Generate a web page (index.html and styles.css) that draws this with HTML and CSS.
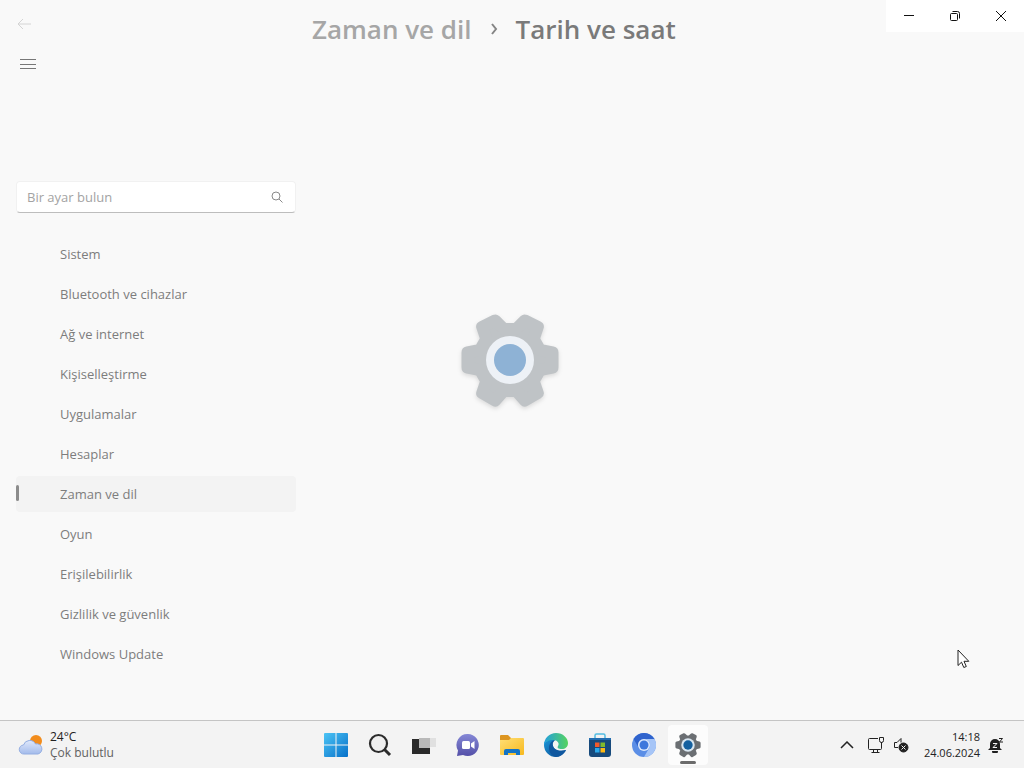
FILE: index.html
```html
<!DOCTYPE html>
<html lang="tr">

<head>
    <meta charset="UTF-8">
    <meta name="viewport" content="width=device-width, initial-scale=1.0">
    <title>Ayarlar</title>
    <link rel="stylesheet" href="styles.css">
</head>

<body>
    <!-- Settings window -->
    <div class="window">
        <aside class="sidebar">
            <button class="icon-btn back" aria-label="Geri">
                <svg width="16" height="16" viewBox="0 0 16 16"><path d="M15 8H2M7 3L2 8l5 5"/></svg>
            </button>
            <button class="icon-btn menu" aria-label="Menü">
                <svg width="16" height="16" viewBox="0 0 16 16"><path d="M0 3.500h16M0 8.500h16M0 12.500h16"/></svg>
            </button>

            <form class="search">
                <input type="text" placeholder="Bir ayar bulun" aria-label="Bir ayar bulun">
                <svg width="12" height="12" viewBox="0 0 12 12"><circle cx="5" cy="5" r="4"/><path d="M8 8l3.500 3.500"/></svg>
            </form>

            <nav class="nav">
                <a href="#">Sistem</a>
                <a href="#">Bluetooth ve cihazlar</a>
                <a href="#">Ağ ve internet</a>
                <a href="#">Kişiselleştirme</a>
                <a href="#">Uygulamalar</a>
                <a href="#">Hesaplar</a>
                <a href="#" class="active">Zaman ve dil</a>
                <a href="#">Oyun</a>
                <a href="#">Erişilebilirlik</a>
                <a href="#">Gizlilik ve güvenlik</a>
                <a href="#">Windows Update</a>
            </nav>
        </aside>

        <main class="content">
            <h1 class="breadcrumb">
                <a href="#">Zaman ve dil</a>
                <svg width="8" height="12" viewBox="0 0 8 12"><path d="M2 1l4 5-4 5"/></svg>
                <span>Tarih ve saat</span>
            </h1>
        </main>

        <div class="caption">
            <button aria-label="Simge durumuna küçült">
                <svg width="12" height="12" viewBox="0 0 12 12"><path d="M1 5.500h10"/></svg>
            </button>
            <button aria-label="Önceki boyut">
                <svg width="12" height="12" viewBox="0 0 12 12"><rect x="1.500" y="3.500" width="7" height="7" rx="1"/><path d="M3.500 1.500h5a2 2 0 0 1 2 2v5"/></svg>
            </button>
            <button aria-label="Kapat">
                <svg width="12" height="12" viewBox="0 0 12 12"><path d="M1 1l10 10M11 1L1 11"/></svg>
            </button>
        </div>

        <!-- Splash gear shown while the page loads -->
        <div class="splash">
            <svg width="104" height="104" viewBox="-50 -52 104 104">
                <path class="gear" d="M30-10L42.500-7.500V7.500L30 10L23.700 21L27.800 33.100L14.800 40.500L6.300 31H-6.300L-14.800 40.500L-27.800 33.100L-23.700 21L-30 10L-42.500 7.500V-7.500L-30-10L-23.700-21L-27.800-33.100L-14.800-39.500L-6.300-31H6.300L14.800-39.500L27.800-33.100L23.700-21Z"/>
                <circle class="ring" r="24"/>
                <circle class="hub" r="16"/>
            </svg>
        </div>

        <svg class="cursor" width="13" height="20" viewBox="0 0 13 20">
            <path d="M1 1v15.500l3.500-3.300 2.300 5.300 2.500-1-2.300-5.200h4.800z"/>
        </svg>
    </div>

    <!-- Taskbar -->
    <footer class="taskbar">
        <button class="weather">
            <svg width="26" height="22" viewBox="0 0 26 22">
                <defs>
                    <linearGradient id="cloud" x1="0" y1="0" x2="0" y2="1">
                        <stop offset="0" stop-color="#dfe8fb"/>
                        <stop offset="1" stop-color="#a3bbeb"/>
                    </linearGradient>
                </defs>
                <circle cx="18" cy="7" r="6" fill="#f28c1c"/>
                <path d="M6 20a4.500 4.500 0 0 1-.5-9A6.500 6.500 0 0 1 17.500 10 5 5 0 0 1 20 20z" fill="url(#cloud)" stroke="#94aee2"/>
            </svg>
            <span class="weather-text">
                <span>24°C</span>
                <span class="muted">Çok bulutlu</span>
            </span>
        </button>

        <div class="apps">
            <button aria-label="Başlat">
                <svg width="24" height="24" viewBox="0 0 24 24">
                    <defs>
                        <linearGradient id="win" x1="0" y1="0" x2="24" y2="24" gradientUnits="userSpaceOnUse">
                            <stop offset="0" stop-color="#4cc4f5"/>
                            <stop offset="1" stop-color="#0670c9"/>
                        </linearGradient>
                    </defs>
                    <path fill="url(#win)" d="M1 0h10.500v11.500H0V1a1 1 0 0 1 1-1zM12.500 0H23a1 1 0 0 1 1 1v10.500H12.500zM0 12.500h11.500V24H1a1 1 0 0 1-1-1zM12.500 12.500H24V23a1 1 0 0 1-1 1H12.500z"/>
                </svg>
            </button>
            <button aria-label="Ara">
                <svg width="24" height="24" viewBox="0 0 24 24" fill="none" stroke="#2b2b2b">
                    <circle cx="10.500" cy="10.500" r="8.500" stroke-width="2.200" fill="#efefef"/>
                    <path d="M16.500 16.500l5.500 5.500" stroke-width="3"/>
                </svg>
            </button>
            <button aria-label="Görev görünümü">
                <svg width="28" height="24" viewBox="0 0 28 24">
                    <path fill="#e0e0e0" d="M18 5h8v9h-8z"/>
                    <path fill="#2a2a2a" d="M2 6h18v15H2z"/>
                    <path fill="#b9b9b9" d="M9 5h11v10H9z"/>
                </svg>
            </button>
            <button aria-label="Sohbet">
                <svg width="24" height="24" viewBox="0 0 24 24">
                    <defs>
                        <linearGradient id="chat" x1="0" y1="0" x2="0" y2="1">
                            <stop offset="0" stop-color="#8588d6"/>
                            <stop offset="1" stop-color="#5450a8"/>
                        </linearGradient>
                    </defs>
                    <path fill="url(#chat)" d="M12 1a11 11 0 1 1-5 20.900L1 23l1-5.500A11 11 0 0 1 12 1z"/>
                    <rect x="6" y="8" width="8" height="8" rx="1.500" fill="#fff"/>
                    <path fill="#fff" d="M15 10.500l3.500-2.500v8L15 13.500z"/>
                </svg>
            </button>
            <button aria-label="Dosya Gezgini">
                <svg width="26" height="24" viewBox="0 0 26 24">
                    <defs>
                        <linearGradient id="folder" x1="0" y1="0" x2="1" y2="1">
                            <stop offset="0" stop-color="#ffdf76"/>
                            <stop offset="1" stop-color="#f7b91e"/>
                        </linearGradient>
                    </defs>
                    <path fill="#dd9520" d="M2 2h7l3 3h11a1 1 0 0 1 1 1v4H1V3a1 1 0 0 1 1-1z"/>
                    <path fill="url(#folder)" d="M1 7h9l2-2h12a1 1 0 0 1 1 1v15a1 1 0 0 1-1 1H2a1 1 0 0 1-1-1z"/>
                    <path fill="#1473c4" d="M5 22v-4a2 2 0 0 1 2-2h12a2 2 0 0 1 2 2v4h-4v-2H9v2z"/>
                </svg>
            </button>
            <button aria-label="Microsoft Edge">
                <svg width="24" height="24" viewBox="0 0 24 24">
                    <defs>
                        <linearGradient id="edgeTop" x1="0" y1="0" x2="1" y2="0">
                            <stop offset="0" stop-color="#249fdd"/>
                            <stop offset="1" stop-color="#55d35f"/>
                        </linearGradient>
                        <linearGradient id="edgeBody" x1="0" y1="0" x2="1" y2="1">
                            <stop offset="0" stop-color="#1a95d8"/>
                            <stop offset="1" stop-color="#0c4b91"/>
                        </linearGradient>
                    </defs>
                    <path fill="url(#edgeBody)" d="M0 12C0 6 6 5 11 7c-2 1-3 3-2 6 1 4 7 6 13 4-2 4-6 7-10 7A12 12 0 0 1 0 12z"/>
                    <path fill="#0f579f" d="M5 15c0-4 3-8 6-8-2 2-3 4-2 6 1 4 7 6 13 4-2 4-6 7-10 7-4-1-7-4-7-9z"/>
                    <path fill="url(#edgeTop)" d="M0 12A12 12 0 0 1 12 0c7 0 12 5 12 10 0 4-3 6-6 6-4 0-5-1-4-3 2-3-1-6-5-6-4 0-8 2-9 5z"/>
                </svg>
            </button>
            <button aria-label="Microsoft Store">
                <svg width="24" height="24" viewBox="0 0 24 24">
                    <path fill="none" stroke="#53bde2" stroke-width="1.500" d="M7 6V2.500A1.500 1.500 0 0 1 8.500 1h7A1.500 1.500 0 0 1 17 2.500V6"/>
                    <path fill="#174a7c" d="M1 5h22v16a3 3 0 0 1-3 3H4a3 3 0 0 1-3-3z"/>
                    <path fill="#226db0" d="M1 5h22v2H1z"/>
                    <path fill="#f15a2b" d="M7 9.500h4.500V14H7z"/>
                    <path fill="#80bb2c" d="M12.500 9.500H17V14h-4.500z"/>
                    <path fill="#2aa8ea" d="M7 15h4.500v4.500H7z"/>
                    <path fill="#fdb913" d="M12.500 15H17v4.500h-4.500z"/>
                </svg>
            </button>
            <button aria-label="Chromium">
                <svg width="24" height="24" viewBox="0 0 24 24">
                    <circle cx="12" cy="12" r="12" fill="#5b8ee6"/>
                    <path fill="#2f63cd" d="M1.600 6A12 12 0 0 1 22.400 6H12a6 6 0 0 0-5.200 9z"/>
                    <path fill="#a6c5f7" d="M22.400 6A12 12 0 0 1 12 24l5.200-9A6 6 0 0 0 12 6z"/>
                    <circle cx="12" cy="12" r="6" fill="#dce9fc"/>
                    <circle cx="12" cy="12" r="4.500" fill="#3d78dc"/>
                </svg>
            </button>
            <button class="running" aria-label="Ayarlar">
                <svg width="26" height="26" viewBox="-50 -50 100 100">
                    <path class="gear" d="M30-10L42.500-7.500V7.500L30 10L23.700 21L27.800 33.100L14.800 40.500L6.300 31H-6.300L-14.800 40.500L-27.800 33.100L-23.700 21L-30 10L-42.500 7.500V-7.500L-30-10L-23.700-21L-27.800-33.100L-14.800-39.500L-6.300-31H6.300L14.800-39.500L27.800-33.100L23.700-21Z"/>
                    <circle class="ring" r="26"/>
                    <circle class="hub" r="18"/>
                </svg>
            </button>
        </div>

        <div class="tray">
            <button aria-label="Gizli simgeleri göster">
                <svg width="14" height="8" viewBox="0 0 14 8" fill="none" stroke="#222" stroke-width="1.500"><path d="M1 7l6-6 6 6"/></svg>
            </button>
            <button class="status" aria-label="Ağ ve ses">
                <svg width="18" height="18" viewBox="0 0 18 18" fill="none" stroke="#222">
                    <path d="M11 2.500H2.500a1 1 0 0 0-1 1v9a1 1 0 0 0 1 1h11a1 1 0 0 0 1-1V7M6.500 13.500v3M10.500 13.500v3M4.500 16.500h8"/>
                    <path d="M12.500 1.500h4v3a2 2 0 0 1-4 0zM14.500 6v3"/>
                </svg>
                <svg width="16" height="16" viewBox="0 0 16 16" fill="none" stroke="#222">
                    <path d="M5 10.500H1.500v-5H4l4-4v4"/>
                    <circle cx="10.500" cy="10.500" r="4.500" fill="#222"/>
                    <path stroke="#f3f3f3" d="M8.500 8.500l4 4M12.500 8.500l-4 4"/>
                </svg>
            </button>
            <button class="clock">
                <span>14:18</span>
                <span>24.06.2024</span>
                <svg width="16" height="16" viewBox="0 0 16 16" aria-label="Bildirimler">
                    <path fill="#1f1f1f" d="M2 11V7a5 5 0 0 1 10 0v4l2 2H0zM4 14h6a3 3 0 0 1-6 0z"/>
                    <path fill="none" stroke="#f3f3f3" d="M5 6.500h4L5 10.500h4"/>
                    <path fill="none" stroke="#1f1f1f" d="M11 1.500h3.500L11.500 5H15"/>
                </svg>
            </button>
        </div>
    </footer>
</body>

</html>
```

FILE: styles.css
```css
/* General Styles */
* {
    box-sizing: border-box;
}

body {
    display: flex;
    flex-direction: column;
    min-height: 100vh;
    margin: 0;
    font-family: "Open Sans", "Noto Sans", sans-serif;
    font-size: 13px;
    background-color: #f9f9f9;
    color: #7d7d7d;
}

button {
    display: flex;
    align-items: center;
    justify-content: center;
    padding: 0;
    border: none;
    background: none;
    font: inherit;
    color: inherit;
}

a {
    color: inherit;
    text-decoration: none;
}

/* Window */
.window {
    position: relative;
    display: flex;
    flex: 1;
}

.sidebar {
    width: 312px;
    padding: 8px 16px 32px;
}

.icon-btn {
    width: 24px;
    height: 32px;
}

.icon-btn svg {
    fill: none;
    stroke: #777;
}

.back svg {
    stroke: #d4d4d4;
}

.back {
    margin-left: -4px;
}

.menu {
    margin-top: 8px;
}

.search {
    display: flex;
    align-items: center;
    height: 32px;
    margin: 101px 0 23px;
    padding: 0 12px 0 10px;
    border: 1px solid #f1f1f1;
    border-bottom-color: #bdbdbd;
    border-radius: 4px;
    background-color: #fff;
}

.search input {
    flex: 1;
    min-width: 0;
    padding: 0;
    border: none;
    outline: none;
    background: none;
    font: inherit;
}

.search input::placeholder {
    color: #a3a3a3;
}

.search svg {
    fill: none;
    stroke: #8a8a8a;
}

.nav {
    display: flex;
    flex-direction: column;
    gap: 4px;
}

.nav a {
    height: 36px;
    padding-left: 44px;
    border-radius: 4px;
    line-height: 36px;
}

.nav .active {
    position: relative;
    background-color: #f3f3f3;
}

.nav .active::before {
    content: "";
    position: absolute;
    top: 9px;
    left: 0;
    width: 3px;
    height: 16px;
    border-radius: 2px;
    background-color: #8c8c8c;
}

.content {
    flex: 1;
}

.breadcrumb {
    display: flex;
    align-items: center;
    gap: 18px;
    margin: 11px 0 0;
    font-size: 26px;
    line-height: 36px;
    font-weight: 600;
    color: #7a7a7a;
}

.breadcrumb a {
    color: #a6a6a6;
}

.breadcrumb svg {
    fill: none;
    stroke: #858585;
    stroke-width: 2;
}

/* Caption buttons */
.caption {
    position: absolute;
    top: 0;
    right: 0;
    display: flex;
    background-color: #fff;
}

.caption button {
    width: 46px;
    height: 32px;
}

.caption svg {
    fill: none;
    stroke: #111;
}

/* Splash */
.splash {
    position: absolute;
    inset: 0;
    display: flex;
    align-items: center;
    justify-content: center;
    pointer-events: none;
}

.splash svg {
    filter: drop-shadow(0 2px 2px rgba(0, 0, 0, 0.12));
}

.gear {
    fill: #bfc3c6;
    stroke: #bfc3c6;
    stroke-width: 12;
    stroke-linejoin: round;
}

.ring {
    fill: #edf1f6;
}

.hub {
    fill: #8eb2d5;
}

.cursor {
    position: absolute;
    right: 54px;
    bottom: 51px;
    fill: #fff;
    stroke: #222;
}

/* Taskbar */
.taskbar {
    display: grid;
    grid-template-columns: 1fr auto 1fr;
    align-items: center;
    height: 48px;
    border-top: 1px solid #c4c4c4;
    background-color: #f3f3f3;
    font-size: 11px;
    line-height: 16px;
    color: #222;
}

.weather {
    justify-self: start;
    gap: 6px;
    padding-left: 18px;
    font-size: 12px;
}

.weather-text {
    display: flex;
    flex-direction: column;
    align-items: flex-start;
}

.muted {
    color: #616161;
}

.apps {
    display: flex;
    gap: 4px;
}

.apps button {
    width: 40px;
    height: 40px;
}

.apps .running {
    position: relative;
    border-radius: 4px;
    background-color: #fcfcfc;
}

.running .gear {
    fill: #6b6f73;
    stroke: #6b6f73;
}

.running .ring {
    fill: #d9e6f0;
}

.running .hub {
    fill: #14609f;
}

.running::after {
    content: "";
    position: absolute;
    bottom: 1px;
    left: 12px;
    width: 16px;
    height: 3px;
    border-radius: 2px;
    background-color: #6b6b6b;
}

.tray {
    display: flex;
    justify-self: end;
    align-items: center;
    gap: 13px;
    padding-right: 20px;
}

.status {
    gap: 8px;
}

/* time over date, bell to the right of both */
.clock {
    display: grid;
    grid-template-columns: auto 16px;
    column-gap: 8px;
    justify-items: end;
    margin-left: 2px;
}

.clock span {
    grid-column: 1;
}

.clock svg {
    grid-column: 2;
    grid-row: 1 / 3;
}
```
